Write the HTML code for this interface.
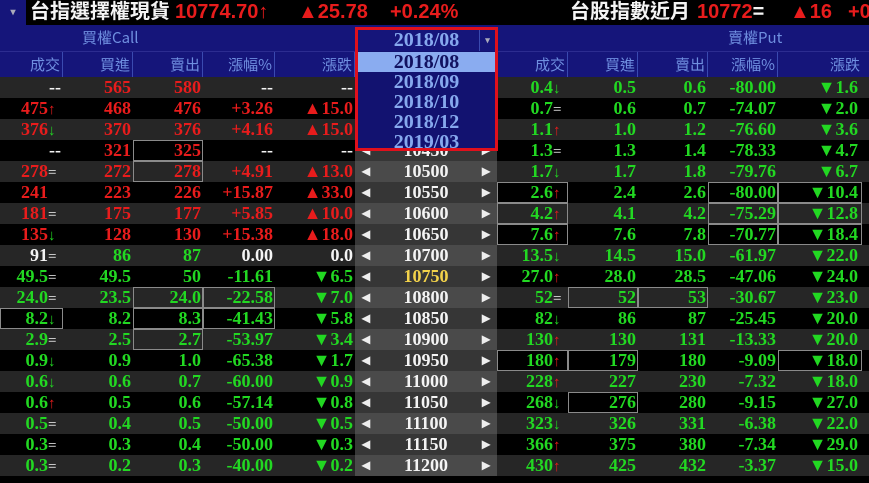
<!DOCTYPE html>
<html><head><meta charset="utf-8">
<style>
*{margin:0;padding:0;box-sizing:border-box}
body{width:869px;height:483px;background:#000;overflow:hidden;position:relative;font-family:"Liberation Serif","Noto Serif CJK SC",serif;}
.top{position:absolute;left:0;top:0;width:869px;height:25px;background:#000;font-family:"Liberation Sans","Noto Sans CJK TC",sans-serif;font-weight:bold;font-size:20px;line-height:25px;white-space:nowrap}
.top span{position:absolute;top:0}
.w{color:#f4f4f4}.r{color:#e81c1c}.g{color:#22d822}.y{color:#f2d24a}
.hdr1{position:absolute;left:0;top:25px;width:869px;height:26px;background:#15157a;color:#6f8fe0;font-family:"Noto Sans CJK TC",sans-serif;font-size:15px;line-height:26px}
.hdr2{position:absolute;left:0;top:51px;width:869px;height:26px;background:#15157a;color:#6f8fe0;font-family:"Noto Sans CJK TC",sans-serif;font-size:15px;line-height:25px;border-top:1px solid #2c2c90}
.hc{position:absolute;top:0;height:25px;text-align:right;padding-right:2px;border-right:1px solid #3a4ab0}
.row{position:absolute;left:0;width:869px;height:21px;font-weight:bold;font-size:18px;line-height:21px;white-space:nowrap}
.row.e{background:#262626}.row.o{background:#000}
.c{position:absolute;top:0;height:21px;text-align:right;padding-right:2px}
.b{box-shadow:inset 0 0 0 1px #8a8a8a}
.s{position:absolute;left:355px;width:142px;top:0;height:21px;text-align:center;color:#f4f4f4}
.s.y{color:#f2d24a}
.e .s{background:#4a4a4a}.o .s{background:#363636}
.s:before{content:"◂";position:absolute;left:7px;font-size:16px;color:#eee}
.s:after{content:"▸";position:absolute;right:7px;font-size:16px;color:#eee}
.m{display:inline-block;width:15px;text-align:left;font-size:15px}
.mu{color:#e81c1c}.md{color:#22d822}.me{color:#f4f4f4;font-weight:normal}
.dd{position:absolute;left:355px;top:27px;width:143px;height:124px;border:3px solid #e0101c;background:#121270;font-weight:bold;font-size:20px;color:#86a8ee;text-align:center}
.dd div{height:20px;line-height:20px}
</style></head><body>
<div class="top">
<span style="left:0;width:26px;height:25px;background:#15157a;color:#aab;font-size:10px;text-align:center">▾</span>
<span class="w" style="left:30px">台指選擇權現貨</span>
<span class="r" style="left:175px">10774.70↑</span>
<span class="r" style="left:298px">▲25.78</span>
<span class="r" style="left:390px">+0.24%</span>
<span class="w" style="left:570px">台股指數近月</span>
<span class="r" style="left:697px">10772<b class="w">=</b></span>
<span class="r" style="left:790px">▲16</span>
<span class="r" style="left:848px">+0</span>
</div>
<div class="hdr1"><span style="position:absolute;left:82px">買權Call</span><span style="position:absolute;left:728px">賣權Put</span></div>
<div class="hdr2">
<div class="hc" style="left:0;width:63px">成交</div>
<div class="hc" style="left:63px;width:70px">買進</div>
<div class="hc" style="left:133px;width:70px">賣出</div>
<div class="hc" style="left:203px;width:72px">漲幅%</div>
<div class="hc" style="left:275px;width:80px">漲跌</div>
<div class="hc" style="left:497px;width:71px">成交</div>
<div class="hc" style="left:568px;width:70px">買進</div>
<div class="hc" style="left:638px;width:70px">賣出</div>
<div class="hc" style="left:708px;width:70px">漲幅%</div>
<div class="hc" style="left:778px;width:84px;border-right:none">漲跌</div>
</div>
<div id="rows"></div>
<script>
var L=[
["w","--","", "r","565","","r","580","","w","--","","w","--",""],
["r","475","u","r","468","","r","476","","r","+3.26","","r","▲15.0",""],
["r","376","d","r","370","","r","376","","r","+4.16","","r","▲15.0",""],
["w","--","", "r","321","","r","325","b","w","--","","w","--",""],
["r","278","e","r","272","","r","278","b","r","+4.91","","r","▲13.0",""],
["r","241","", "r","223","","r","226","","r","+15.87","","r","▲33.0",""],
["r","181","e","r","175","","r","177","","r","+5.85","","r","▲10.0",""],
["r","135","d","r","128","","r","130","","r","+15.38","","r","▲18.0",""],
["w","91","e","g","86","","g","87","","w","0.00","","w","0.0",""],
["g","49.5","e","g","49.5","","g","50","","g","-11.61","","g","▼6.5",""],
["g","24.0","e","g","23.5","","g","24.0","b","g","-22.58","b","g","▼7.0",""],
["g","8.2","d","g","8.2","","g","8.3","b","g","-41.43","b","g","▼5.8",""],
["g","2.9","e","g","2.5","","g","2.7","b","g","-53.97","","g","▼3.4",""],
["g","0.9","d","g","0.9","","g","1.0","","g","-65.38","","g","▼1.7",""],
["g","0.6","d","g","0.6","","g","0.7","","g","-60.00","","g","▼0.9",""],
["g","0.6","u","g","0.5","","g","0.6","","g","-57.14","","g","▼0.8",""],
["g","0.5","e","g","0.4","","g","0.5","","g","-50.00","","g","▼0.5",""],
["g","0.3","e","g","0.3","","g","0.4","","g","-50.00","","g","▼0.3",""],
["g","0.3","e","g","0.2","","g","0.3","","g","-40.00","","g","▼0.2",""]];
var R=[
["0.4","d","0.5","","0.6","","-80.00","","▼1.6",""],
["0.7","e","0.6","","0.7","","-74.07","","▼2.0",""],
["1.1","u","1.0","","1.2","","-76.60","","▼3.6",""],
["1.3","e","1.3","","1.4","","-78.33","","▼4.7",""],
["1.7","d","1.7","","1.8","","-79.76","","▼6.7",""],
["2.6","u","2.4","","2.6","","-80.00","b","▼10.4","b"],
["4.2","u","4.1","","4.2","","-75.29","b","▼12.8","b"],
["7.6","u","7.6","","7.8","","-70.77","b","▼18.4","b"],
["13.5","d","14.5","","15.0","","-61.97","","▼22.0",""],
["27.0","u","28.0","","28.5","","-47.06","","▼24.0",""],
["52","e","52","b","53","b","-30.67","","▼23.0",""],
["82","d","86","","87","","-25.45","","▼20.0",""],
["130","u","130","","131","","-13.33","","▼20.0",""],
["180","u","179","b","180","","-9.09","","▼18.0","b"],
["228","u","227","","230","","-7.32","","▼18.0",""],
["268","d","276","b","280","","-9.15","","▼27.0",""],
["323","d","326","","331","","-6.38","","▼22.0",""],
["366","u","375","","380","","-7.34","","▼29.0",""],
["430","u","425","","432","","-3.37","","▼15.0",""]];
var lb=[[0,63],[63,70],[133,70],[203,72],[275,80]];
var rb=[[497,71],[568,70],[638,70],[708,70],[778,84]];
var mk={u:'<span class="m mu">↑</span>',d:'<span class="m md">↓</span>',e:'<span class="m me">=</span>',"":'<span class="m"></span>'};
var h="";
for(var i=0;i<19;i++){
 var l=L[i],r=R[i];
 h+='<div class="row '+(i%2?'o':'e')+'" style="top:'+(77+i*21)+'px">';
 for(var k=0;k<5;k++){
  var col=l[k*3],txt=l[k*3+1],ex=l[k*3+2];
  var cls='c '+col; var inner=txt;
  if(k==0){inner=txt+(i==0||i==3?'':mk[ex]); if(i==11)cls+=' b'; if(i==0||i==3)inner=txt;}
  else if(ex=='b')cls+=' b';
  h+='<div class="'+cls+'" style="left:'+lb[k][0]+'px;width:'+lb[k][1]+'px'+(k==0&&i!=0&&i!=3?';padding-right:0':'')+'">'+inner+'</div>';
 }
 var st=10300+i*50;
 h+='<div class="s'+(st==10750?' y':'')+'">'+st+'</div>';
 for(var k=0;k<5;k++){
  var txt=r[k*2],ex=r[k*2+1];var cls='c g';var inner=txt;
  if(k==0){inner=txt+mk[ex]; if(i>=5&&i<=7||i==13)cls+=' b';}
  else if(ex=='b')cls+=' b';
  h+='<div class="'+cls+'" style="left:'+rb[k][0]+'px;width:'+rb[k][1]+'px'+(k==0?';padding-right:0':'')+(k==4?';padding-right:4px':'')+'">'+inner+'</div>';
 }
 h+='</div>';
}
document.getElementById('rows').innerHTML=h;
</script>
<div class="dd">
<div style="background:#15157a;height:21px;line-height:21px;position:relative">2018/08<span style="position:absolute;right:0;top:0;width:16px;height:21px;border-left:1px solid #3a4ab0;font-size:9px;color:#aab">▾</span></div>
<div style="background:#8aacf0;color:#121260;margin-top:1px">2018/08</div>
<div>2018/09</div>
<div>2018/10</div>
<div>2018/12</div>
<div>2019/03</div>
</div>
</body></html>
